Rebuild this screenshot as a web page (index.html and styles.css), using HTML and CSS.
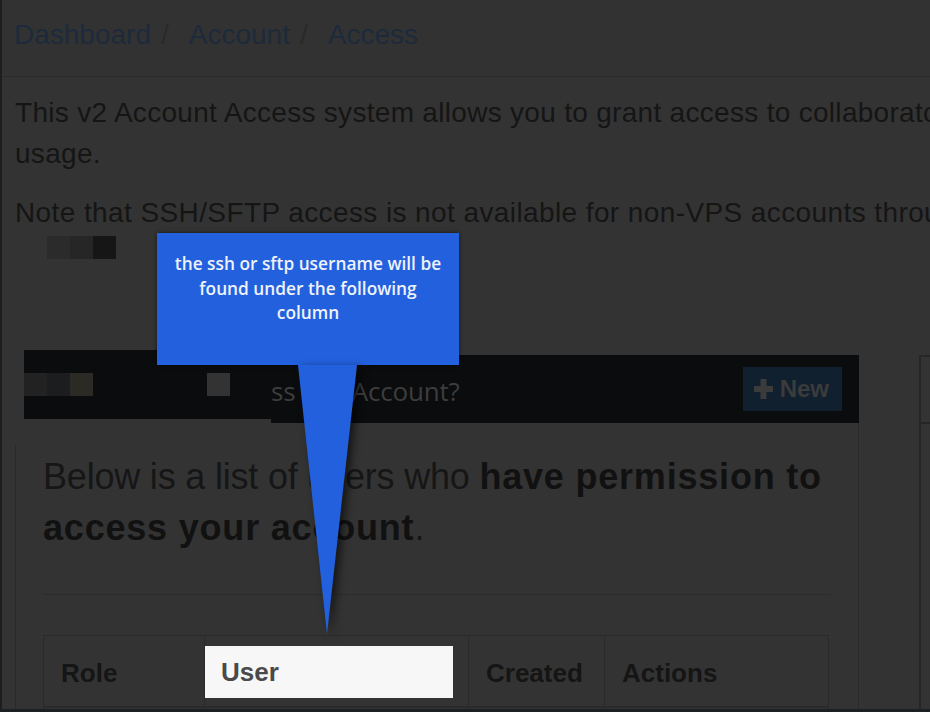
FILE: index.html
```html
<!DOCTYPE html>
<html lang="en">
<head>
  <meta charset="UTF-8">
  <meta name="viewport" content="width=device-width, initial-scale=1.0">
  <title>Account Access</title>
  <link rel="stylesheet" href="styles.css">
</head>
<body>
  <div class="crumbs">
    <a href="#">Dashboard</a><span class="sep">/</span><a href="#">Account</a><span class="sep">/</span><a href="#">Access</a>
  </div>

  <div class="intro">
    <p>This v2 Account Access system allows you to grant access to collaborators and track their<br>usage.</p>
    <p>Note that SSH/SFTP access is not available for non-VPS accounts through this system.</p>
    <div class="pixels"><i class="px1"></i><i class="px2"></i><i class="px3"></i></div>
  </div>

  <div class="panels">
    <section class="panel">
      <div class="panel-heading">
        <div class="redact">
          <i class="rx1"></i><i class="rx2"></i><i class="rx3"></i><i class="rx4"></i>
        </div>
        <div class="heading-bar">
          <h3>ss this Account?</h3>
          <button class="btn-new">
            <svg width="19" height="20" viewBox="0 0 19 20"><path d="M6.5 0h6v7h6.5v6h-6.5v7h-6v-7h-6.5v-6h6.5z" fill="#3b3b3b"/></svg>
            New
          </button>
        </div>
      </div>
      <div class="panel-body">
        <div class="panel-inner">
          <p class="lead">Below is a list of users who <strong>have permission to access your account</strong>.</p>
          <hr>
          <table class="users">
            <colgroup>
              <col class="c-role"><col class="c-user"><col class="c-created"><col class="c-actions">
            </colgroup>
            <thead>
              <tr>
                <th>Role</th>
                <th class="th-spot"><div class="spot">User</div></th>
                <th>Created</th>
                <th>Actions</th>
              </tr>
            </thead>
            <tbody>
              <tr><td>Owner</td><td>admin</td><td>2019</td><td>-</td></tr>
            </tbody>
          </table>
        </div>
      </div>
    </section>
    <section class="panel-side">
      <div class="side-heading"></div>
    </section>
  </div>

  <div class="tour">
    <div class="tour-box">the ssh or sftp username will be found under the following column</div>
  </div>
  <svg class="tour-arrow" width="80" height="280" viewBox="0 0 80 280">
    <polygon points="8,5 67,5 37,274" fill="#2360dd"/>
  </svg>
</body>
</html>
```

FILE: styles.css
```css
/* General */
html, body {
  height: 100%;
}

body {
  margin: 0;
  border-left: 2px solid #1e1e1e;
  background-color: #333;
  color: #151515;
  font-family: "Liberation Sans", Arial, sans-serif;
  overflow: hidden;
}

body::after {
  content: "";
  position: fixed;
  left: 0;
  right: 0;
  bottom: 0;
  height: 3px;
  background: #1b2024;
}

/* Breadcrumb */
.crumbs {
  height: 77px;
  box-sizing: border-box;
  padding: 19px 0 0 12px;
  background: #323232;
  border-bottom: 1px solid #2a2a2a;
  font-size: 28px;
  line-height: 32px;
  white-space: nowrap;
}

.crumbs a {
  color: #1d2a3b;
  text-decoration: none;
}

.crumbs .sep {
  color: #292929;
  margin: 0 20px 0 10px;
}

/* Intro text */
.intro {
  width: 1300px;
  padding-left: 13px;
}

.intro p {
  margin: 15px 0 18px;
  font-size: 28px;
  line-height: 41px;
  letter-spacing: 0.3px;
  white-space: nowrap;
}

.intro p + p {
  margin: 0;
  letter-spacing: 0.4px;
}

.pixels {
  display: flex;
  margin: 3px 0 0 32px;
}

.pixels i,
.redact i {
  width: 23px;
  height: 23px;
}

.px1 { background: #2b2b2b; }
.px2 { background: #262626; }
.px3 { background: #161616; }

/* Panels */
.panels {
  display: flex;
  align-items: flex-start;
  margin: 96px 0 0 13px;
}

.panel {
  width: 844px;
  flex-shrink: 0;
}

.panel-heading {
  display: flex;
  align-items: flex-start;
  height: 68px;
  margin-left: 9px;
}

.redact {
  display: flex;
  width: 247px;
  height: 69px;
  margin-top: -5px;
  padding-top: 23px;
  box-sizing: border-box;
  background: #0b0c0e;
}

.rx1 { background: #212221; }
.rx2 { background: #1c1d1f; }
.rx3 { background: #2c2a24; }
.rx4 { background: #333; margin-left: 114px; }

.heading-bar {
  flex: 1;
  height: 68px;
  display: flex;
  align-items: center;
  background: #0b0c0e;
}

.heading-bar h3 {
  margin: 3px 0 0;
  font-family: "Open Sans", sans-serif;
  font-weight: 400;
  font-size: 26px;
  color: #3d3d3d;
  letter-spacing: -0.2px;
}

.btn-new {
  display: flex;
  align-items: center;
  gap: 7px;
  height: 44px;
  margin: 0 17px 0 auto;
  padding: 0 13px 0 11px;
  border: none;
  background: #10202f;
  color: #3b3b3b;
  font-family: "Liberation Sans", Arial, sans-serif;
  font-size: 24px;
  font-weight: bold;
}

.panel-body {
  padding-top: 22px;
  border-right: 1px solid #2a2a2a;
}

.panel-inner {
  padding: 6px 27px 0;
  border-left: 1px solid #2a2a2a;
}

.lead {
  margin: 0;
  font-size: 36px;
  line-height: 51px;
  letter-spacing: -0.2px;
  color: #161616;
}

.lead strong {
  color: #111;
  letter-spacing: 0.8px;
}

hr {
  margin: 41px 0 40px;
  border: none;
  border-top: 1px solid #2c2c2c;
}

/* Table */
.users {
  width: 785px;
  table-layout: fixed;
  border-collapse: collapse;
  font-size: 26px;
  line-height: 37px;
}

.c-role { width: 161px; }
.c-user { width: 264px; }
.c-created { width: 136px; }
.c-actions { width: 224px; }

.users th,
.users td {
  border: 1px solid #2a2a2a;
  padding: 19px 17px 14px;
  text-align: left;
  color: #151515;
}

.users thead th {
  border-bottom-width: 2px;
}

.users th.th-spot {
  padding: 0;
}

.spot {
  display: flex;
  align-items: center;
  height: 52px;
  margin: 10px 15px 8px 0;
  padding-left: 16px;
  background: #f7f7f7;
  color: #4a4a4a;
}

.panel-side {
  width: 200px;
  flex-shrink: 0;
  margin-left: 60px;
  border-left: 2px solid #262626;
  border-top: 2px solid #262626;
  height: 400px;
}

.side-heading {
  height: 65px;
  border-bottom: 2px solid #262626;
}

/* Tour callout */
.tour {
  position: absolute;
  left: 157px;
  top: 233px;
}

.tour-box {
  width: 302px;
  height: 132px;
  box-sizing: border-box;
  padding: 19px 14px 0;
  background: #2360dd;
  box-shadow: 0 0 4px rgba(0, 0, 0, 0.6);
  color: #eef2fb;
  font-family: "Open Sans", sans-serif;
  font-weight: 600;
  font-size: 17.3px;
  line-height: 24.5px;
  text-align: center;
}

.tour-arrow {
  position: absolute;
  left: 290px;
  top: 360px;
  filter: drop-shadow(4px 3px 4px rgba(0, 0, 0, 0.6));
}
```
